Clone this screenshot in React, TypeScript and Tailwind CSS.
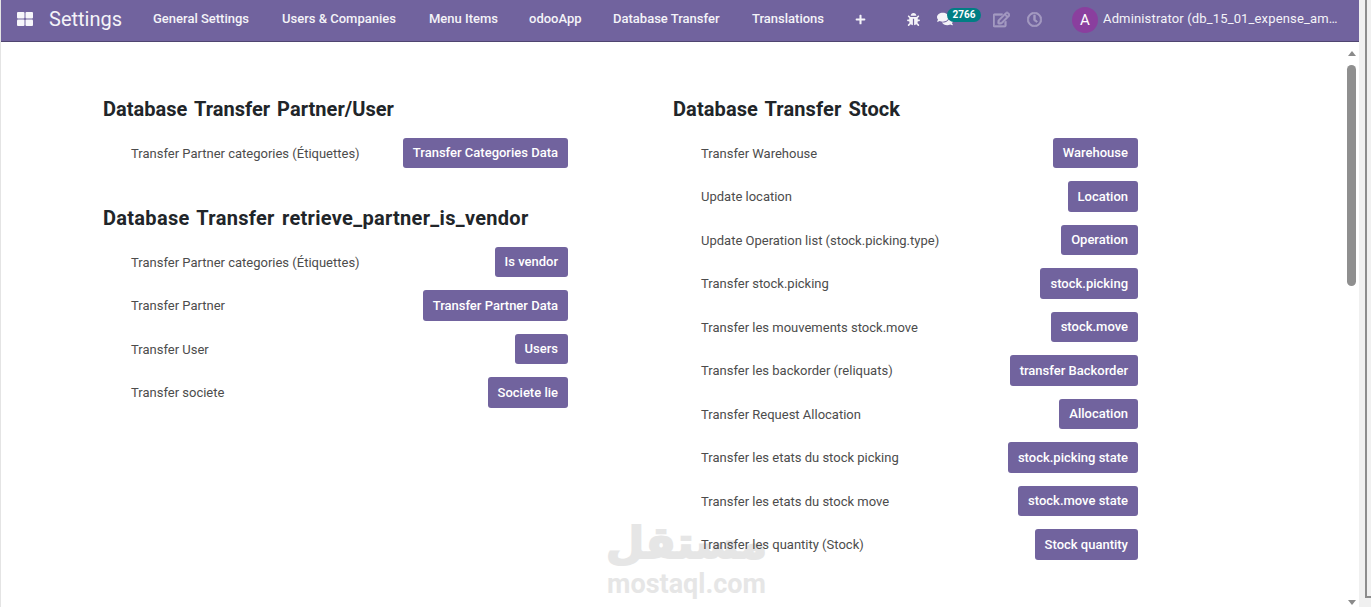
import { FaBug, FaComments, FaPlus, FaRegClock, FaRegEdit } from "react-icons/fa";

const menuItems = [
  { label: "General Settings", className: "w-[97px] mr-[32px]" },
  { label: "Users & Companies", className: "w-[115px] mr-[32px]" },
  { label: "Menu Items", className: "w-[69px] mr-[31px]" },
  { label: "odooApp", className: "w-[52px] mr-[32px]" },
  { label: "Database Transfer", className: "w-[107px] mr-[32px]" },
  { label: "Translations", className: "w-[71px] mr-[32px]" },
];

const partnerRows = [{ label: "Transfer Partner categories (Étiquettes)", action: "Transfer Categories Data" }];

const vendorRows = [
  { label: "Transfer Partner categories (Étiquettes)", action: "Is vendor" },
  { label: "Transfer Partner", action: "Transfer Partner Data" },
  { label: "Transfer User", action: "Users" },
  { label: "Transfer societe", action: "Societe lie" },
];

const stockRows = [
  { label: "Transfer Warehouse", action: "Warehouse" },
  { label: "Update location", action: "Location" },
  { label: "Update Operation list (stock.picking.type)", action: "Operation" },
  { label: "Transfer stock.picking", action: "stock.picking" },
  { label: "Transfer les mouvements stock.move", action: "stock.move" },
  { label: "Transfer les backorder (reliquats)", action: "transfer Backorder" },
  { label: "Transfer Request Allocation", action: "Allocation" },
  { label: "Transfer les etats du stock picking", action: "stock.picking state" },
  { label: "Transfer les etats du stock move", action: "stock.move state" },
  { label: "Transfer les quantity (Stock)", action: "Stock quantity" },
];

function Section({ title, rows, className, titleClass }: { title: string; rows: { label: string; action: string }[]; className?: string; titleClass?: string }) {
  return (
    <section className={className}>
      <h2 className={`h-[24px] text-[20px] leading-[24px] font-bold text-[#212529] whitespace-nowrap [word-spacing:2px] ${titleClass ?? ""}`}>{title}</h2>
      <div className="mt-[16.75px]">
        {rows.map((row) => (
          <div key={row.label + row.action} className="h-[43.5px] flex items-start justify-between pl-[28px]">
            <span className="h-[30.5px] leading-[31px] text-[13px] text-[#4c4c4c] relative z-10">{row.label}</span>
            <button className="h-[30.5px] px-[10px] bg-[#71639e] rounded-[3px] text-white text-[13px] font-medium leading-[28px] whitespace-nowrap">
              {row.action}
            </button>
          </div>
        ))}
      </div>
    </section>
  );
}

export default function App() {
  return (
    <div className="h-[607px] w-[1371px] overflow-hidden flex bg-[#f0f0f0] font-['Roboto',sans-serif]">
      <div className="w-[1px] shrink-0 bg-[#e4e4e4]" />
      <div className="w-[1358px] shrink-0 flex flex-col bg-white relative">
        <header className="h-[42px] shrink-0 flex items-center pb-[3px] bg-[#71639e] border-b border-[#4f4570] text-[#f4f3f8] text-[13px]">
          <svg viewBox="0 0 16 14" className="w-[16px] h-[14px] ml-[16px] mr-[16px] shrink-0" fill="#f7f7fb">
            <rect x="0" y="0" width="7.5" height="6.5" rx="1" />
            <rect x="8.5" y="0" width="7.5" height="6.5" rx="1" />
            <rect x="0" y="7.5" width="7.5" height="6.5" rx="1" />
            <rect x="8.5" y="7.5" width="7.5" height="6.5" rx="1" />
          </svg>
          <span className="w-[104px] text-[20px] shrink-0">Settings</span>
          {menuItems.map((item) => (
            <span key={item.label} className={`${item.className} shrink-0 whitespace-nowrap font-medium`}>
              {item.label}
            </span>
          ))}
          <FaPlus className="text-[11px] mr-[41px] shrink-0" />
          <FaBug className="text-[13px] mr-[17px] shrink-0" />
          <div className="relative w-[16px] h-[16px] mr-[40px] shrink-0 flex items-center">
            <FaComments className="text-[16px]" />
            <span className="absolute left-[10px] top-[-3px] h-[14px] w-[34px] rounded-full bg-[#017e84] text-[10px] leading-[14px] text-center font-bold text-white">
              2766
            </span>
          </div>
          <FaRegEdit className="text-[17px] text-[#a59bc2] mr-[17px] shrink-0 [stroke-width:24]" />
          <FaRegClock className="text-[15px] text-[#a59bc2] mr-[30px] shrink-0 [stroke-width:24]" />
          <span className="w-[26px] h-[26px] rounded-full bg-[#8a3f9e] text-white text-[15px] flex items-center justify-center mr-[5px] mt-[2px] shrink-0">
            A
          </span>
          <span className="w-[237px] truncate font-normal tracking-[0.15px]">Administrator (db_15_01_expense_amine_test_all)</span>
        </header>

        <div className="flex-1 flex min-h-0">
          <main className="flex-1 pt-[55px] pl-[102px] flex items-start relative">
            <div className="w-[465px] mr-[105px] shrink-0">
              <Section title="Database Transfer Partner/User" rows={partnerRows} titleClass="tracking-[0.03px]" />
              <Section title="Database Transfer retrieve_partner_is_vendor" rows={vendorRows} className="mt-[24.75px]" titleClass="tracking-[0.3px]" />
            </div>
            <Section title="Database Transfer Stock" rows={stockRows} className="w-[465px] shrink-0" titleClass="tracking-[0.1px]" />
          </main>
          {/* scrollbar */}
          <div className="w-[11px] mr-[2px] shrink-0 flex flex-col items-center pt-[9px] pb-[2px]">
            <div className="w-0 h-0 border-x-[4.5px] border-x-transparent border-b-[5px] border-b-[#8a8a8a]" />
            <div className="w-[9px] h-[221px] mt-[9px] rounded-full bg-[#8f8f8f]" />
            <div className="flex-1" />
            <div className="w-0 h-0 border-x-[4.5px] border-x-transparent border-t-[5px] border-t-[#8a8a8a]" />
          </div>
        </div>

        {/* mostaql watermark */}
        <div className="absolute left-[605px] top-[516px] w-[161px] flex flex-col items-center text-[#e6e6e6] select-none">
          <span dir="rtl" className="h-[54px] text-[44px] leading-[54px] font-bold font-['DejaVu_Sans',sans-serif] [-webkit-text-stroke:2px_#e6e6e6]">مستقل</span>
          <span className="text-[27px] leading-[28px] font-bold font-['Roboto',sans-serif]">mostaql.com</span>
        </div>
      </div>
      <div className="w-[6px] shrink-0" />
      <div className="w-[6px] h-[598px] shrink-0 border-l-2 border-b-2 border-[#8c8c8c]" />
    </div>
  );
}
